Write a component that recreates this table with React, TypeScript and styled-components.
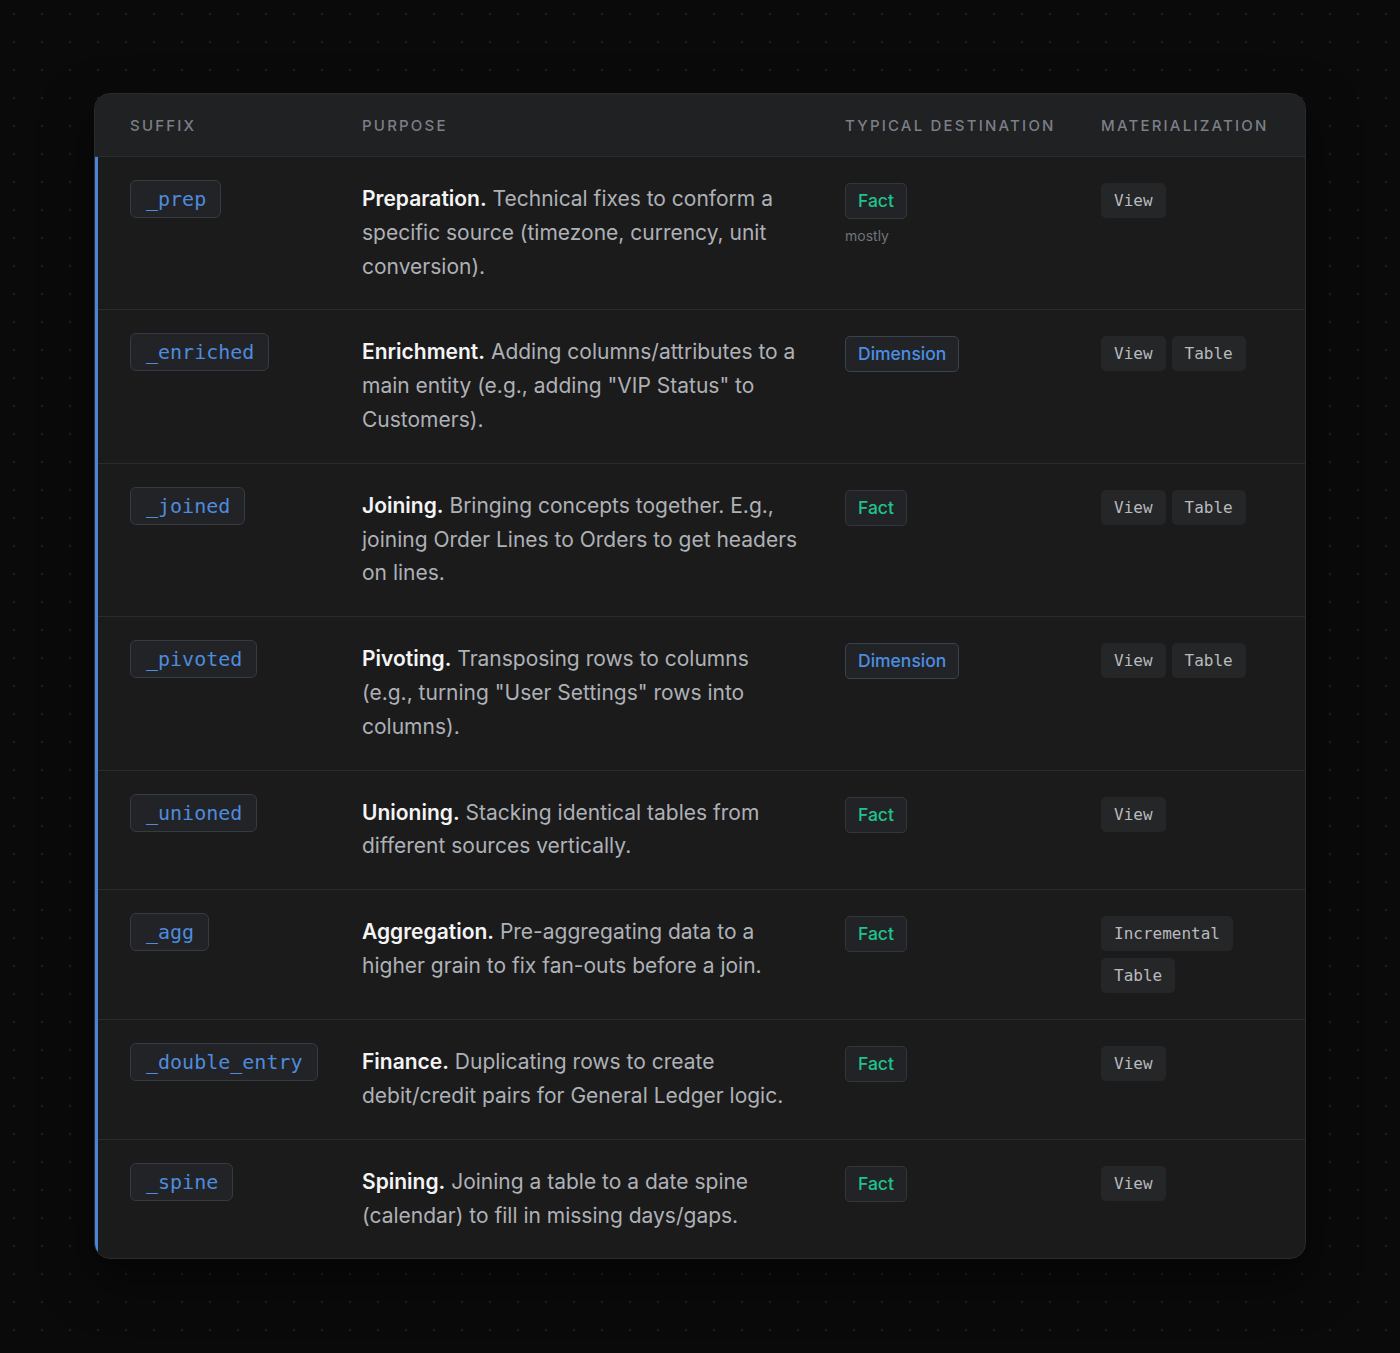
import React from "react";
import styled, { createGlobalStyle } from "styled-components";

const Global = createGlobalStyle`
  html, body { margin: 0; padding: 0; }
  body {
    background-color: #0a0a0b;
    background-image: radial-gradient(circle at 14px 14px, #1f1f22 1.2px, transparent 1.6px);
    background-size: 28px 28px;
    font-family: Inter, "Noto Sans", sans-serif;
    -webkit-font-smoothing: antialiased;
  }
`;

const Page = styled.div`
  padding: 93px 94px 95px;
  min-height: 1353px;
  box-sizing: border-box;
`;

const Card = styled.div`
  background: #1b1b1c;
  border: 1px solid #2a2b2e;
  border-radius: 16px;
  overflow: hidden;
  box-shadow: 0 20px 50px rgba(0, 0, 0, 0.5);
`;

const cols = "232px 483px 256px 1fr";

const HeaderRow = styled.div`
  display: grid;
  grid-template-columns: ${cols};
  align-items: center;
  height: 62px;
  padding: 0 35px;
  background: #202123;
  border-bottom: 1px solid #2b2c2f;
`;

const HeadCell = styled.div`
  font-size: 15px;
  font-weight: 500;
  letter-spacing: 2.2px;
  text-transform: uppercase;
  color: #7b7f87;
`;

const Body = styled.div`
  border-left: 3px solid #4a86d8;
`;

const Row = styled.div<{ $last?: boolean }>`
  display: grid;
  grid-template-columns: ${cols};
  align-items: start;
  padding: 25px 35px 26px 32px;
  border-bottom: ${(p) => (p.$last ? "none" : "1px solid #2a2b2e")};
`;

const Suffix = styled.span`
  display: inline-block;
  margin-top: -2px;
  padding: 6px 14px 6px 15px;
  font-family: "DejaVu Sans Mono", "Liberation Mono", monospace;
  font-size: 20px;
  line-height: 24px;
  color: #4f8bdc;
  background: #212327;
  border: 1px solid #363a41;
  border-radius: 6px;
`;

const Purpose = styled.p`
  margin: 0;
  padding-right: 42px;
  font-size: 21px;
  line-height: 33.8px;
  color: #aeb1b6;
`;

const Lead = styled.strong`
  font-weight: 600;
  color: #f4f4f5;
`;

const DestCell = styled.div`
  display: flex;
  flex-direction: column;
  align-items: flex-start;
  padding-top: 1px;
`;

const Dest = styled.span<{ $kind: "fact" | "dim" }>`
  display: inline-block;
  padding: 6px 12px;
  font-size: 17.5px;
  font-weight: 500;
  line-height: 22px;
  color: ${(p) => (p.$kind === "fact" ? "#1fc48b" : "#4c8ee2")};
  background: #212327;
  border: 1px solid ${(p) => (p.$kind === "fact" ? "#33373c" : "#3a4250")};
  border-radius: 5px;
`;

const Note = styled.span`
  margin-top: 8px;
  font-size: 14px;
  color: #6f737a;
`;

const MatCell = styled.div`
  display: flex;
  flex-wrap: wrap;
  gap: 7px 6px;
  padding-top: 1px;
`;

const Mat = styled.span`
  display: inline-block;
  padding: 6px 13px;
  font-family: "DejaVu Sans Mono", "Liberation Mono", monospace;
  font-size: 16px;
  line-height: 23px;
  color: #b9babd;
  background: #252628;
  border-radius: 5px;
`;

type RowData = {
  suffix: string;
  lead: string;
  text: string;
  dest: "fact" | "dim";
  note?: string;
  mats: string[];
};

const rows: RowData[] = [
  {
    suffix: "_prep",
    lead: "Preparation.",
    text: "Technical fixes to conform a specific source (timezone, currency, unit conversion).",
    dest: "fact",
    note: "mostly",
    mats: ["View"],
  },
  {
    suffix: "_enriched",
    lead: "Enrichment.",
    text: 'Adding columns/attributes to a main entity (e.g., adding "VIP Status" to Customers).',
    dest: "dim",
    mats: ["View", "Table"],
  },
  {
    suffix: "_joined",
    lead: "Joining.",
    text: "Bringing concepts together. E.g., joining Order Lines to Orders to get headers on lines.",
    dest: "fact",
    mats: ["View", "Table"],
  },
  {
    suffix: "_pivoted",
    lead: "Pivoting.",
    text: 'Transposing rows to columns (e.g., turning "User Settings" rows into columns).',
    dest: "dim",
    mats: ["View", "Table"],
  },
  {
    suffix: "_unioned",
    lead: "Unioning.",
    text: "Stacking identical tables from different sources vertically.",
    dest: "fact",
    mats: ["View"],
  },
  {
    suffix: "_agg",
    lead: "Aggregation.",
    text: "Pre-aggregating data to a higher grain to fix fan-outs before a join.",
    dest: "fact",
    mats: ["Incremental", "Table"],
  },
  {
    suffix: "_double_entry",
    lead: "Finance.",
    text: "Duplicating rows to create debit/credit pairs for General Ledger logic.",
    dest: "fact",
    mats: ["View"],
  },
  {
    suffix: "_spine",
    lead: "Spining.",
    text: "Joining a table to a date spine (calendar) to fill in missing days/gaps.",
    dest: "fact",
    mats: ["View"],
  },
];

export default function App() {
  return (
    <Page>
      <Global />
      <Card>
        <HeaderRow>
          <HeadCell>Suffix</HeadCell>
          <HeadCell>Purpose</HeadCell>
          <HeadCell>Typical Destination</HeadCell>
          <HeadCell>Materialization</HeadCell>
        </HeaderRow>
        <Body>
          {rows.map((r, i) => (
            <Row key={r.suffix} $last={i === rows.length - 1}>
              <div>
                <Suffix>{r.suffix}</Suffix>
              </div>
              <Purpose>
                <Lead>{r.lead}</Lead> {r.text}
              </Purpose>
              <DestCell>
                <Dest $kind={r.dest}>{r.dest === "fact" ? "Fact" : "Dimension"}</Dest>
                {r.note && <Note>{r.note}</Note>}
              </DestCell>
              <MatCell>
                {r.mats.map((m) => (
                  <Mat key={m}>{m}</Mat>
                ))}
              </MatCell>
            </Row>
          ))}
        </Body>
      </Card>
    </Page>
  );
}
